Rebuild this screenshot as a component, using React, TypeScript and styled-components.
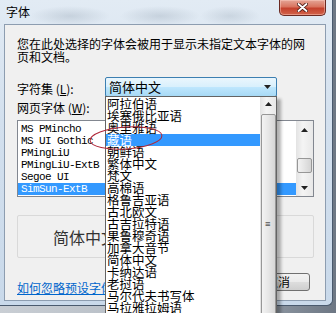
import styled, { createGlobalStyle } from 'styled-components';

const CJK = `"Noto Sans CJK SC", "Noto Sans", sans-serif`;

const charsets = [
  '阿拉伯语',
  '埃塞俄比亚语',
  '奥里雅语',
  '藏语',
  '朝鲜语',
  '繁体中文',
  '梵文',
  '高棉语',
  '格鲁吉亚语',
  '古北欧文',
  '古吉拉特语',
  '果鲁穆奇语',
  '加拿大音节',
  '简体中文',
  '卡纳达语',
  '老挝语',
  '马尔代夫书写体',
  '马拉雅拉姆语',
  '蒙古语',
];

const webFonts = ['MS PMincho', 'MS UI Gothic', 'PMingLiU', 'PMingLiU-ExtB', 'Segoe UI', 'SimSun-ExtB'];

const GlobalStyle = createGlobalStyle`
  html, body {
    margin: 0;
    padding: 0;
  }
  body {
    width: 336px;
    height: 313px;
    overflow: hidden;
    background: #9ea7b1;
  }
`;

const Arrow = ({ down }: { down?: boolean }) => (
  <svg width="7" height="4" viewBox="0 0 7 4">
    <path d={down ? 'M0 0 L7 0 L3.5 4 Z' : 'M0 4 L7 4 L3.5 0 Z'} fill="#222" />
  </svg>
);

const App = () => {
  return (
    <Screen>
      <GlobalStyle />
      <Window>
        <TitleBar>
          <Title>字体</Title>
          <CloseButton>
            <svg width="11" height="9" viewBox="0 0 11 9">
              <path d="M1.5 1 L9.5 8 M9.5 1 L1.5 8" stroke="#4a1a14" strokeWidth="3.6" strokeLinecap="round" />
              <path d="M1.5 1 L9.5 8 M9.5 1 L1.5 8" stroke="#ffffff" strokeWidth="1.8" strokeLinecap="round" />
            </svg>
          </CloseButton>
        </TitleBar>
        <Panel>
          <Description>您在此处选择的字体会被用于显示未指定文本字体的网页和文档。</Description>
          <FieldRow>
            <FieldLabel $width={88}>字符集 (<u>L</u>):</FieldLabel>
            <ComboBox>
              <ComboText>简体中文</ComboText>
              <ComboArrow>
                <Arrow down />
              </ComboArrow>
            </ComboBox>
          </FieldRow>
          <ListCaption>网页字体 (<u>W</u>):</ListCaption>
          <FontList>
            <FontItems>
              {webFonts.map((f) => (
                <FontItem key={f} $selected={f === 'SimSun-ExtB'}>
                  {f}
                </FontItem>
              ))}
            </FontItems>
            <ScrollBar>
              <ScrollButton>
                <Arrow />
              </ScrollButton>
              <ScrollTrack>
                <ListThumb />
              </ScrollTrack>
              <ScrollButton>
                <Arrow down />
              </ScrollButton>
            </ScrollBar>
          </FontList>
          <Preview>
            <PreviewText>简体中文</PreviewText>
          </Preview>
          <BottomRow>
            <HelpLink>如何忽略预设字体设置？</HelpLink>
            <ButtonGroup>
              <PushButton>确定</PushButton>
              <PushButton>取消</PushButton>
            </ButtonGroup>
          </BottomRow>
        </Panel>
      </Window>

      <DropList>
        <DropItems>
          {charsets.map((c) => (
            <DropItem key={c} $selected={c === '藏语'}>
              {c}
            </DropItem>
          ))}
        </DropItems>
        <DropScroll>
          <ScrollButton>
            <Arrow />
          </ScrollButton>
          <DropThumb>
            <Grip>≡</Grip>
          </DropThumb>
        </DropScroll>
      </DropList>

      <Marker width="80" height="30" viewBox="0 0 80 30">
        <ellipse
          cx="39"
          cy="14"
          rx="36"
          ry="11"
          fill="none"
          stroke="#b0283a"
          strokeWidth="1"
          transform="rotate(-4 39 14)"
        />
      </Marker>
    </Screen>
  );
};

const Screen = styled.div`
  position: relative;
  width: 336px;
  height: 313px;
  overflow: hidden;
  background: linear-gradient(90deg, #c9ced4 0%, #aeb6bf 60%, #6d7784 100%);
`;

const Window = styled.div`
  width: 333px;
  height: 306px;
  box-sizing: border-box;
  padding: 0 6px 4px 4px;
  display: flex;
  flex-direction: column;
  background:
    radial-gradient(ellipse 40px 10px at 70px 16px, rgba(150, 165, 180, 0.35), transparent),
    radial-gradient(ellipse 40px 10px at 160px 16px, rgba(150, 165, 180, 0.35), transparent),
    radial-gradient(ellipse 30px 10px at 230px 16px, rgba(150, 165, 180, 0.3), transparent),
    linear-gradient(180deg, #e2ebf4 0%, #d3e0ee 40%, #c9d9ea 100%);
  border-right: 1px solid #4a5a6e;
  border-bottom: 1px solid #4a5a6e;
  border-bottom-right-radius: 6px;
`;

const TitleBar = styled.div`
  height: 24px;
  display: flex;
  justify-content: space-between;
  align-items: flex-start;
`;

const Title = styled.div`
  padding: 5px 0 0 2px;
  font-family: ${CJK};
  font-size: 12px;
  line-height: 14px;
  color: #000;
`;

const CloseButton = styled.div`
  width: 47px;
  height: 16px;
  box-sizing: border-box;
  display: flex;
  align-items: center;
  justify-content: center;
  border: 1px solid #6b2a22;
  border-top: none;
  border-radius: 0 0 5px 5px;
  background: linear-gradient(180deg, #e4a596 0%, #d9745f 45%, #c4412d 55%, #d2644a 100%);
  box-shadow: inset 0 0 0 1px rgba(255, 210, 200, 0.45);
`;

const Panel = styled.div`
  flex: 1;
  box-sizing: border-box;
  padding: 12px 11px 0 12px;
  display: flex;
  flex-direction: column;
  background: #f0f0f0;
  border: 1px solid #8d9db0;
`;

const Description = styled.div`
  width: 292px;
  font-family: ${CJK};
  font-size: 12px;
  line-height: 13px;
  color: #000;
`;

const FieldRow = styled.div`
  margin-top: 14px;
  display: flex;
  align-items: center;
  height: 20px;
`;

const FieldLabel = styled.div<{ $width: number }>`
  width: ${({ $width }) => $width}px;
  font-family: ${CJK};
  font-size: 12px;
  line-height: 14px;
  padding-top: 3px;
  color: #000;
`;

const ComboBox = styled.div`
  width: 172px;
  height: 20px;
  box-sizing: border-box;
  display: flex;
  align-items: center;
  border: 1px solid #3c7fb1;
  border-radius: 2px;
  background: linear-gradient(180deg, #eaf6fd 0%, #d9f0fc 48%, #bee6fd 52%, #a7d9f5 100%);
`;

const ComboText = styled.div`
  flex: 1;
  padding-left: 3px;
  font-family: ${CJK};
  font-size: 13px;
  line-height: 16px;
  color: #000;
`;

const ComboArrow = styled.div`
  width: 17px;
  display: flex;
  justify-content: center;
`;

const ListCaption = styled.div`
  margin-top: 4px;
  height: 14px;
  font-family: ${CJK};
  font-size: 12px;
  line-height: 14px;
  color: #000;
`;

const FontList = styled.div`
  margin-top: 5px;
  height: 77px;
  box-sizing: border-box;
  display: flex;
  border: 1px solid #828790;
  background: #fff;
`;

const FontItems = styled.div`
  flex: 1;
  padding-top: 2px;
`;

const FontItem = styled.div<{ $selected?: boolean }>`
  height: 12px;
  padding-left: 3px;
  font-family: 'Liberation Mono', monospace;
  font-size: 11px;
  letter-spacing: -0.6px;
  line-height: 12px;
  color: ${({ $selected }) => ($selected ? '#fff' : '#000')};
  background: ${({ $selected }) => ($selected ? '#3399ff' : 'transparent')};
`;

const ScrollBar = styled.div`
  width: 17px;
  display: flex;
  flex-direction: column;
  background: linear-gradient(90deg, #e3e3e3, #f4f4f4 40%, #e8e8e8);
`;

const ScrollButton = styled.div`
  height: 17px;
  display: flex;
  align-items: center;
  justify-content: center;
`;

const ScrollTrack = styled.div`
  flex: 1;
  display: flex;
  flex-direction: column;
  align-items: center;
`;

const ListThumb = styled.div`
  margin-top: 20px;
  width: 15px;
  height: 15px;
  box-sizing: border-box;
  border: 1px solid #979797;
  border-radius: 2px;
  background: linear-gradient(90deg, #f3f3f3, #e4e4e4 50%, #d4d4d4);
`;

const Preview = styled.div`
  margin-top: 18px;
  height: 43px;
  box-sizing: border-box;
  display: flex;
  align-items: center;
  padding-left: 35px;
  border: 1px solid #d9d9d9;
  border-radius: 2px;
  background: #f0f0f0;
`;

const PreviewText = styled.div`
  font-family: ${CJK};
  font-size: 16px;
  line-height: 18px;
  color: #333;
`;

const BottomRow = styled.div`
  margin-top: 15px;
  display: flex;
  align-items: flex-start;
  justify-content: space-between;
  padding-right: 4px;
`;

const HelpLink = styled.a`
  margin-top: 9px;
  font-family: ${CJK};
  font-size: 12px;
  line-height: 12px;
  color: #0066cc;
  text-decoration: underline;
`;

const ButtonGroup = styled.div`
  display: flex;
  gap: 6px;
`;

const PushButton = styled.div`
  width: 64px;
  height: 18px;
  box-sizing: border-box;
  display: flex;
  align-items: center;
  justify-content: center;
  border: 1px solid #707070;
  border-radius: 3px;
  background: linear-gradient(180deg, #f2f2f2 0%, #ebebeb 48%, #dddddd 52%, #cfcfcf 100%);
  font-family: ${CJK};
  font-size: 12px;
  line-height: 14px;
  color: #000;
`;

const DropList = styled.div`
  position: absolute;
  left: 105px;
  top: 96px;
  width: 172px;
  height: 240px;
  box-sizing: border-box;
  display: flex;
  border: 1px solid #646464;
  background: #fff;
  box-shadow: 4px 3px 3px rgba(0, 0, 0, 0.3);
`;

const DropItems = styled.div`
  flex: 1;
  padding-top: 1px;
`;

const DropItem = styled.div<{ $selected?: boolean }>`
  height: 12px;
  padding-left: 1px;
  font-family: ${CJK};
  font-size: 12.5px;
  line-height: 12px;
  color: ${({ $selected }) => ($selected ? '#fff' : '#000')};
  background: ${({ $selected }) => ($selected ? '#3399ff' : 'transparent')};
  white-space: nowrap;
`;

const DropScroll = styled.div`
  width: 16px;
  display: flex;
  flex-direction: column;
  align-items: center;
  background: linear-gradient(90deg, #e3e3e3, #f4f4f4 40%, #e8e8e8);
`;

const DropThumb = styled.div`
  margin-top: 3px;
  width: 15px;
  height: 260px;
  box-sizing: border-box;
  display: flex;
  align-items: center;
  justify-content: center;
  border: 1px solid #979797;
  border-radius: 2px;
  background: linear-gradient(90deg, #f3f3f3, #e6e6e6 50%, #d6d6d6);
`;

const Grip = styled.span`
  font-family: 'DejaVu Sans', sans-serif;
  font-size: 9px;
  line-height: 9px;
  color: #555;
  transform: scaleX(0.8);
`;

const Marker = styled.svg`
  position: absolute;
  left: 87px;
  top: 124px;
  overflow: visible;
`;

export default App;
